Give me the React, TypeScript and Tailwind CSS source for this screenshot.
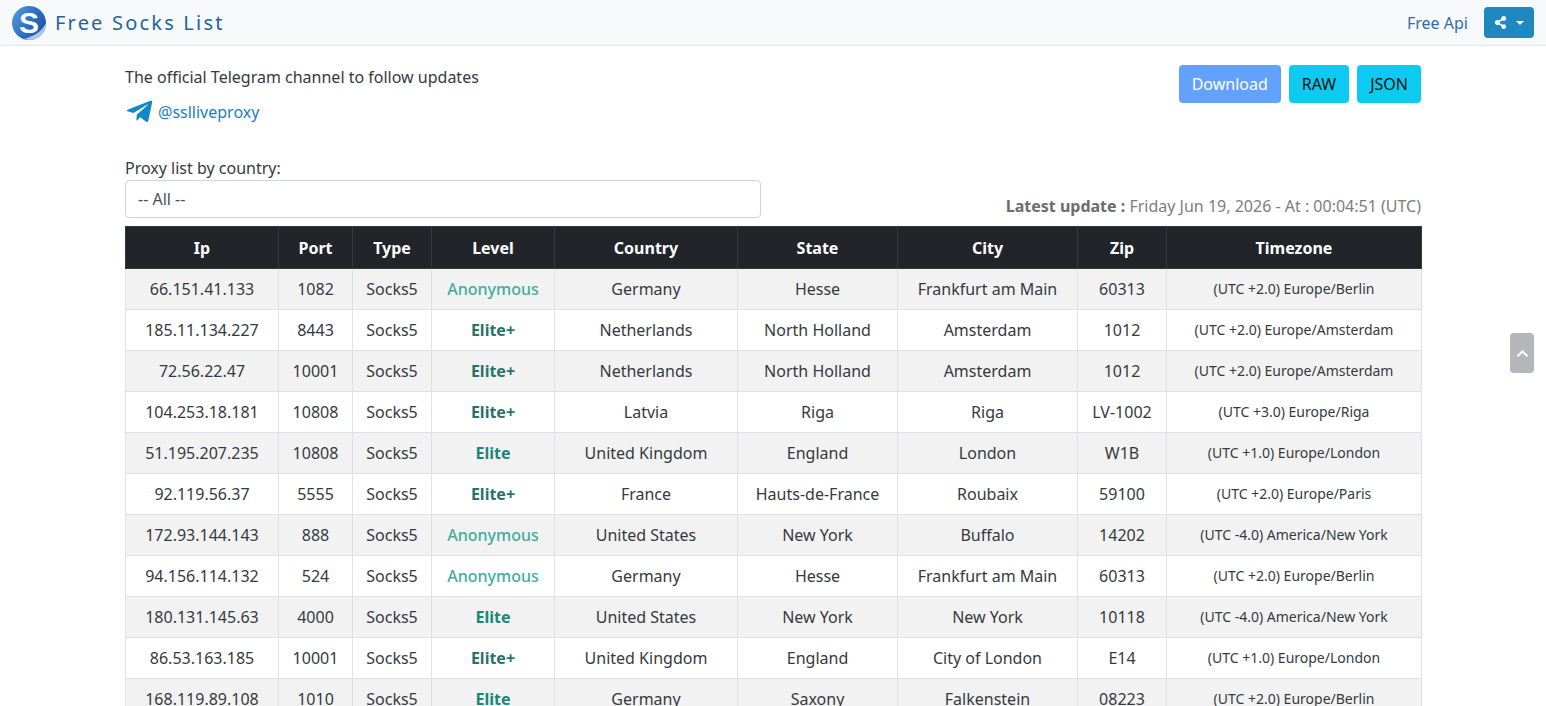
import { FaChevronUp, FaShareAlt, FaTelegramPlane } from "react-icons/fa";

const rows = [
  ["66.151.41.133", "1082", "Anonymous", "Germany", "Hesse", "Frankfurt am Main", "60313", "(UTC +2.0) Europe/Berlin"],
  ["185.11.134.227", "8443", "Elite+", "Netherlands", "North Holland", "Amsterdam", "1012", "(UTC +2.0) Europe/Amsterdam"],
  ["72.56.22.47", "10001", "Elite+", "Netherlands", "North Holland", "Amsterdam", "1012", "(UTC +2.0) Europe/Amsterdam"],
  ["104.253.18.181", "10808", "Elite+", "Latvia", "Riga", "Riga", "LV-1002", "(UTC +3.0) Europe/Riga"],
  ["51.195.207.235", "10808", "Elite", "United Kingdom", "England", "London", "W1B", "(UTC +1.0) Europe/London"],
  ["92.119.56.37", "5555", "Elite+", "France", "Hauts-de-France", "Roubaix", "59100", "(UTC +2.0) Europe/Paris"],
  ["172.93.144.143", "888", "Anonymous", "United States", "New York", "Buffalo", "14202", "(UTC -4.0) America/New York"],
  ["94.156.114.132", "524", "Anonymous", "Germany", "Hesse", "Frankfurt am Main", "60313", "(UTC +2.0) Europe/Berlin"],
  ["180.131.145.63", "4000", "Elite", "United States", "New York", "New York", "10118", "(UTC -4.0) America/New York"],
  ["86.53.163.185", "10001", "Elite+", "United Kingdom", "England", "City of London", "E14", "(UTC +1.0) Europe/London"],
  ["168.119.89.108", "1010", "Elite", "Germany", "Saxony", "Falkenstein", "08223", "(UTC +2.0) Europe/Berlin"],
];

const headers = ["Ip", "Port", "Type", "Level", "Country", "State", "City", "Zip", "Timezone"];
const widths = ["w-[153px]", "w-[74px]", "w-[79px]", "w-[123px]", "w-[183px]", "w-[160px]", "w-[180px]", "w-[89px]", "w-[255px]"];

const levelClass = (level: string) => {
  if (level === "Anonymous") return "font-medium text-[#3fae9b]";
  if (level === "Elite") return "font-bold text-[#16877a]";
  return "font-bold text-[#2a7268]";
};

const Logo = () => (
  <svg viewBox="0 0 34 34" className="h-[34px] w-[34px] shrink-0">
    <defs>
      <linearGradient id="logoBlue" x1="0" y1="0" x2="1" y2="0.6">
        <stop offset="0" stopColor="#5b9be0" />
        <stop offset="0.55" stopColor="#2f74c4" />
        <stop offset="1" stopColor="#1c55a6" />
      </linearGradient>
    </defs>
    <circle cx="17" cy="17" r="17" fill="url(#logoBlue)" />
    <path d="M17 34a17 17 0 0 0 17-17c-4 8-11 13-22 16z" fill="#a9c8ea" />
    <text x="17" y="27" textAnchor="middle" fontFamily="'Liberation Sans', sans-serif" fontWeight="700" fontSize="30" fill="#fff">
      S
    </text>
  </svg>
);

export default function App() {
  return (
    <div className="relative h-[706px] overflow-hidden bg-white font-['Noto_Sans',sans-serif] text-base text-[#343a40]">
      {/* Navbar */}
      <nav className="flex h-[46px] items-center justify-between border-b border-[#e4e7ea] bg-[#f8f9fa] pl-[12px] pr-3">
        <a className="flex items-center gap-[9px]">
          <Logo />
          <span className="text-[20px] tracking-[2.2px] text-[#23649e]">Free Socks List</span>
        </a>
        <div className="flex items-center gap-4">
          <a className="text-base text-[#2f6da8]">Free Api</a>
          <button className="flex h-[31px] w-[50px] items-center justify-center gap-[9px] rounded bg-[#1e88c0] text-white">
            <FaShareAlt className="text-[13px]" />
            <span className="h-0 w-0 border-x-[4px] border-t-[4px] border-x-transparent border-t-white" />
          </button>
        </div>
      </nav>

      <main className="mx-[125px] w-[1296px]">
        {/* Telegram + buttons */}
        <div className="flex items-start justify-between pt-[19px]">
          <div>
            <p className="h-6 leading-6">The official Telegram channel to follow updates</p>
            <a className="mt-[8px] flex items-center gap-[4px] text-[#1a7fbd]">
              <FaTelegramPlane className="text-[29px] text-[#1088cc]" />
              <span className="text-base">@sslliveproxy</span>
            </a>
          </div>
          <div className="flex gap-2">
            <button className="h-[38px] rounded bg-[#62a2fc] px-[13px] text-white">Download</button>
            <button className="h-[38px] rounded bg-[#0dcaf0] px-[13px] text-[#111]">RAW</button>
            <button className="h-[38px] rounded bg-[#0dcaf0] px-[13px] text-[#111]">JSON</button>
          </div>
        </div>

        {/* Country filter + update time */}
        <div className="mt-[30px] flex items-end justify-between">
          <div className="w-[636px]">
            <label className="block h-6 leading-6">Proxy list by country:</label>
            <div className="flex h-[38px] items-center rounded border border-[#ced4da] px-3 text-[#495057]">-- All --</div>
          </div>
          <p className="leading-6 text-[#7d7d7d]">
            <b className="font-bold text-[#6c6c6c]">Latest update : </b>Friday Jun 19, 2026 - At : 00:04:51 (UTC)
          </p>
        </div>

        {/* Proxy table */}
        <table className="mt-2 w-[1296px] table-fixed border-collapse text-center">
          <colgroup>
            {widths.map((w) => (
              <col key={w} className={w} />
            ))}
          </colgroup>
          <thead>
            <tr className="h-[42px] bg-[#212529] text-white">
              {headers.map((h) => (
                <th key={h} className="border border-[#32383e] font-bold">
                  {h}
                </th>
              ))}
            </tr>
          </thead>
          <tbody>
            {rows.map((r, i) => (
              <tr key={r[0]} className={i % 2 === 0 ? "h-[41px] bg-[#f2f2f2]" : "h-[41px] bg-white"}>
                <td className="border border-[#dee2e6]">{r[0]}</td>
                <td className="border border-[#dee2e6]">{r[1]}</td>
                <td className="border border-[#dee2e6]">Socks5</td>
                <td className={`border border-[#dee2e6] ${levelClass(r[2])}`}>{r[2]}</td>
                <td className="border border-[#dee2e6]">{r[3]}</td>
                <td className="border border-[#dee2e6]">{r[4]}</td>
                <td className="border border-[#dee2e6]">{r[5]}</td>
                <td className="border border-[#dee2e6]">{r[6]}</td>
                <td className="border border-[#dee2e6] text-sm">{r[7]}</td>
              </tr>
            ))}
          </tbody>
        </table>
      </main>

      {/* Back to top */}
      <button className="absolute left-[1510px] top-[333px] flex h-10 w-6 items-center justify-center rounded bg-[#b5b8ba] text-white">
        <FaChevronUp className="text-[13px]" />
      </button>
    </div>
  );
}
